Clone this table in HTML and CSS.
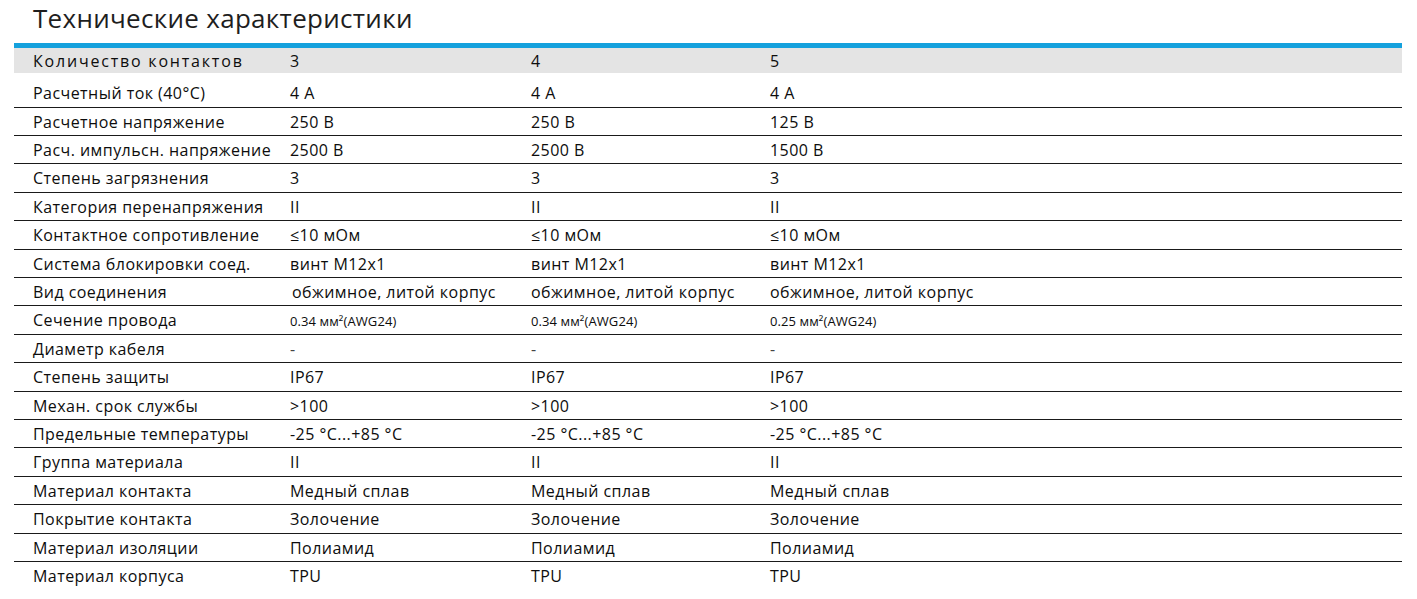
FILE: index.html
```html
<!DOCTYPE html>
<html lang="ru">
<head>
<meta charset="utf-8">
<title>Технические характеристики</title>
<link rel="stylesheet" href="styles.css">
</head>
<body>
<h1 class="title">Технические характеристики</h1>
<div class="specs">
  <div class="row head"><span class="label">Количество контактов</span><span>3</span><span>4</span><span>5</span></div>
  <div class="row first"><span>Расчетный ток (40°C)</span><span>4 A</span><span>4 A</span><span>4 A</span></div>
  <div class="row ruled"><span>Расчетное напряжение</span><span>250 В</span><span>250 В</span><span>125 В</span></div>
  <div class="row ruled"><span>Расч. импульсн. напряжение</span><span>2500 В</span><span>2500 В</span><span>1500 В</span></div>
  <div class="row ruled"><span>Степень загрязнения</span><span>3</span><span>3</span><span>3</span></div>
  <div class="row ruled"><span>Категория перенапряжения</span><span>II</span><span>II</span><span>II</span></div>
  <div class="row ruled"><span>Контактное сопротивление</span><span>≤10 мОм</span><span>≤10 мОм</span><span>≤10 мОм</span></div>
  <div class="row ruled"><span>Система блокировки соед.</span><span>винт M12x1</span><span>винт M12x1</span><span>винт M12x1</span></div>
  <div class="row ruled"><span>Вид соединения</span><span class="shift">обжимное, литой корпус</span><span>обжимное, литой корпус</span><span>обжимное, литой корпус</span></div>
  <div class="row ruled"><span>Сечение провода</span><span class="small">0.34 мм²(AWG24)</span><span class="small">0.34 мм²(AWG24)</span><span class="small">0.25 мм²(AWG24)</span></div>
  <div class="row ruled"><span>Диаметр кабеля</span><span class="dash">-</span><span class="dash">-</span><span class="dash">-</span></div>
  <div class="row ruled"><span>Степень защиты</span><span>IP67</span><span>IP67</span><span>IP67</span></div>
  <div class="row ruled"><span>Механ. срок службы</span><span>&gt;100</span><span>&gt;100</span><span>&gt;100</span></div>
  <div class="row ruled"><span>Предельные температуры</span><span>-25 °C...+85 °C</span><span>-25 °C...+85 °C</span><span>-25 °C...+85 °C</span></div>
  <div class="row ruled"><span>Группа материала</span><span>II</span><span>II</span><span>II</span></div>
  <div class="row ruled"><span>Материал контакта</span><span>Медный сплав</span><span>Медный сплав</span><span>Медный сплав</span></div>
  <div class="row ruled"><span>Покрытие контакта</span><span>Золочение</span><span>Золочение</span><span>Золочение</span></div>
  <div class="row ruled"><span>Материал изоляции</span><span>Полиамид</span><span>Полиамид</span><span>Полиамид</span></div>
  <div class="row ruled"><span>Материал корпуса</span><span>TPU</span><span>TPU</span><span>TPU</span></div>
</div>
</body>
</html>
```
FILE: styles.css
```css
html, body {
  margin: 0;
  padding: 0;
  background: #ffffff;
}
body {
  font-family: "Open Sans", "Noto Sans", sans-serif;
  color: #0d0d0d;
  width: 1417px;
}
.title {
  margin: 0;
  padding: 1px 0 0 33px;
  height: 43px;
  box-sizing: border-box;
  font-size: 26px;
  font-weight: 400;
  line-height: 34px;
  color: #1e1e1e;
  letter-spacing: 0.3px;
}
.specs {
  display: flex;
  flex-direction: column;
  margin-left: 14px;
  width: 1388px;
  border-top: 5px solid #14a1dd;
}
.row {
  position: relative;
  display: grid;
  grid-template-columns: 257px 241px 239px 1fr;
  padding-left: 19px;
  box-sizing: border-box;
  height: 28.42px;
  flex: none;
  font-size: 16px;
  line-height: 20px;
  padding-top: 5px;
  letter-spacing: 0.45px;
}
.row.ruled::before {
  content: "";
  position: absolute;
  left: 0;
  right: 0;
  top: 0;
  height: 1px;
  background-color: #1a1a1a;
}
.row.head {
  background-color: #e4e4e4;
  height: 25px;
  padding-top: 3px;
}
.row.head .label {
  letter-spacing: 1.8px;
}
.row.first {
  height: 33.5px;
  padding-top: 10px;
}
.small {
  font-size: 13px;
  letter-spacing: 0.1px;
  padding-top: 1px;
}
.shift {
  padding-left: 2px;
}
.dash {
  color: #444444;
}
```
